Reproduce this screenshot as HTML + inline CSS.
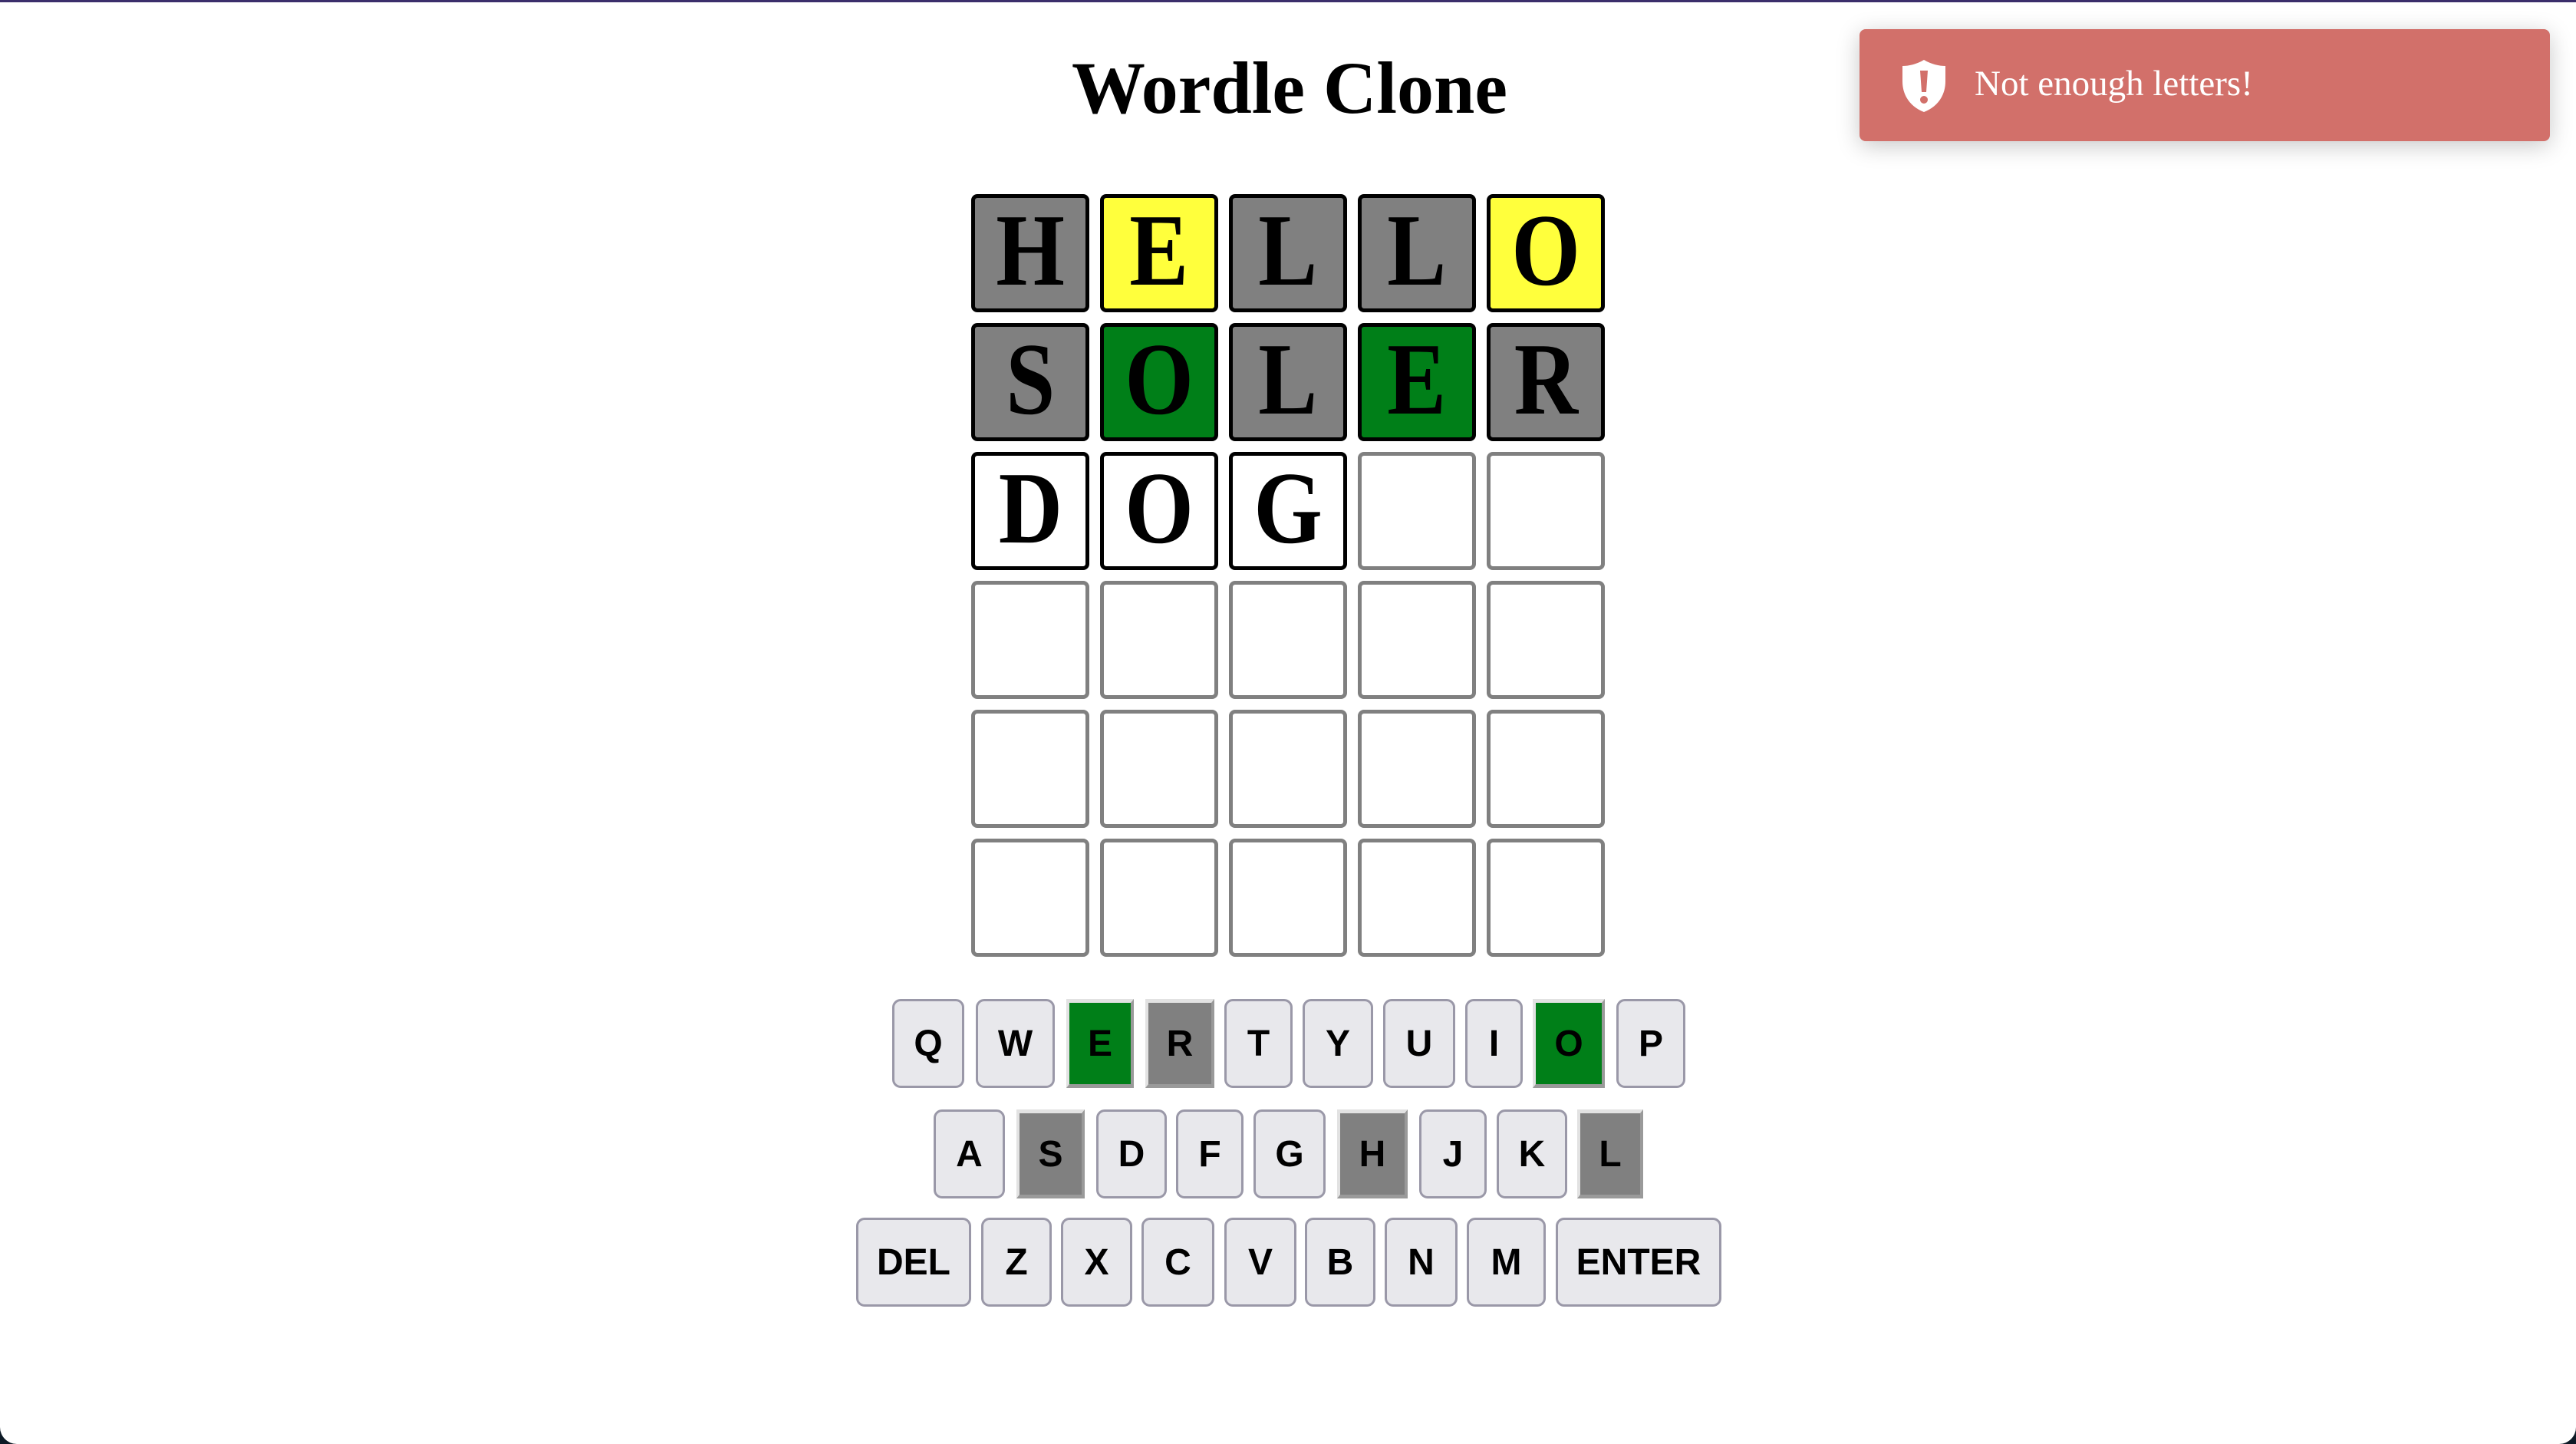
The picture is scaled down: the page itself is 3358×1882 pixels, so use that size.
<!DOCTYPE html>
<html><head><meta charset="utf-8"><style>
html,body{margin:0;padding:0;width:3358px;height:1882px;overflow:hidden;background:#0d1a26;}
#pg{position:absolute;left:0;top:0;width:3358px;height:1882px;background:#fff;border-radius:0 0 22px 22px;overflow:hidden;}
#bar{position:absolute;left:0;top:0;width:3358px;height:3px;background:#3b2e6b;}
h1{position:absolute;left:0;width:3358px;top:50px;margin:0;text-align:center;font:bold 96px "Liberation Serif",serif;line-height:130px;color:#000;padding-left:4px;box-sizing:border-box;}
.t{position:absolute;width:154px;height:154px;box-sizing:border-box;border:5px solid #000;border-radius:8px;font:bold 134px "Liberation Serif",serif;line-height:136px;color:#000;text-align:center;}
.t span{display:inline-block;transform:scaleX(0.86);}
.e{border-color:#808080;background:#fff;}
.g{background:#808080}.y{background:#ffff3c}.gr{background:#007f18}.w{background:#fff}
.k{position:absolute;box-sizing:border-box;background:#e8e8ec;border:3px solid #9a98a8;border-radius:11px;font:bold 48px "Liberation Sans",sans-serif;color:#000;text-align:center;}
.kg,.kx{border-radius:0;border-width:5px 4px;border-style:solid;border-color:#e2e2e2 #9a9a9a #9a9a9a #e2e2e2;}
.kg{background:#007f18}.kx{background:#808080}
#toast{position:absolute;left:2424px;top:38px;width:900px;height:146px;background:#d2706a;border-radius:8px;box-shadow:0 6px 30px rgba(0,0,0,0.22);}
#toast .tx{position:absolute;left:150px;top:0;font:47px "Liberation Serif",serif;line-height:142px;color:#fff;}
</style></head><body><div id="pg">
<div id="bar"></div>
<h1>Wordle Clone</h1>

<div class="t g" style="left:1266px;top:253px"><span>H</span></div>
<div class="t y" style="left:1434px;top:253px"><span>E</span></div>
<div class="t g" style="left:1602px;top:253px"><span>L</span></div>
<div class="t g" style="left:1770px;top:253px"><span>L</span></div>
<div class="t y" style="left:1938px;top:253px"><span>O</span></div>

<div class="t g" style="left:1266px;top:421px"><span>S</span></div>
<div class="t gr" style="left:1434px;top:421px"><span>O</span></div>
<div class="t g" style="left:1602px;top:421px"><span>L</span></div>
<div class="t gr" style="left:1770px;top:421px"><span>E</span></div>
<div class="t g" style="left:1938px;top:421px"><span>R</span></div>

<div class="t w" style="left:1266px;top:589px"><span>D</span></div>
<div class="t w" style="left:1434px;top:589px"><span>O</span></div>
<div class="t w" style="left:1602px;top:589px"><span>G</span></div>
<div class="t e" style="left:1770px;top:589px"></div>
<div class="t e" style="left:1938px;top:589px"></div>

<div class="t e" style="left:1266px;top:757px"></div><div class="t e" style="left:1434px;top:757px"></div><div class="t e" style="left:1602px;top:757px"></div><div class="t e" style="left:1770px;top:757px"></div><div class="t e" style="left:1938px;top:757px"></div>
<div class="t e" style="left:1266px;top:925px"></div><div class="t e" style="left:1434px;top:925px"></div><div class="t e" style="left:1602px;top:925px"></div><div class="t e" style="left:1770px;top:925px"></div><div class="t e" style="left:1938px;top:925px"></div>
<div class="t e" style="left:1266px;top:1093px"></div><div class="t e" style="left:1434px;top:1093px"></div><div class="t e" style="left:1602px;top:1093px"></div><div class="t e" style="left:1770px;top:1093px"></div><div class="t e" style="left:1938px;top:1093px"></div>

<div class="k" style="left:1163px;top:1302px;width:94px;height:116px;line-height:112px">Q</div>
<div class="k" style="left:1272px;top:1302px;width:103px;height:116px;line-height:112px">W</div>
<div class="k kg" style="left:1390px;top:1302px;width:88px;height:116px;line-height:108px">E</div>
<div class="k kx" style="left:1493px;top:1302px;width:90px;height:116px;line-height:108px">R</div>
<div class="k" style="left:1596px;top:1302px;width:89px;height:116px;line-height:112px">T</div>
<div class="k" style="left:1698px;top:1302px;width:92px;height:116px;line-height:112px">Y</div>
<div class="k" style="left:1803px;top:1302px;width:94px;height:116px;line-height:112px">U</div>
<div class="k" style="left:1910px;top:1302px;width:75px;height:116px;line-height:112px">I</div>
<div class="k kg" style="left:1998px;top:1302px;width:94px;height:116px;line-height:108px">O</div>
<div class="k" style="left:2107px;top:1302px;width:90px;height:116px;line-height:112px">P</div>

<div class="k" style="left:1217px;top:1446px;width:93px;height:116px;line-height:112px">A</div>
<div class="k kx" style="left:1325px;top:1446px;width:89px;height:116px;line-height:108px">S</div>
<div class="k" style="left:1429px;top:1446px;width:92px;height:116px;line-height:112px">D</div>
<div class="k" style="left:1533px;top:1446px;width:88px;height:116px;line-height:112px">F</div>
<div class="k" style="left:1634px;top:1446px;width:94px;height:116px;line-height:112px">G</div>
<div class="k kx" style="left:1743px;top:1446px;width:92px;height:116px;line-height:108px">H</div>
<div class="k" style="left:1850px;top:1446px;width:88px;height:116px;line-height:112px">J</div>
<div class="k" style="left:1951px;top:1446px;width:92px;height:116px;line-height:112px">K</div>
<div class="k kx" style="left:2056px;top:1446px;width:86px;height:116px;line-height:108px">L</div>

<div class="k" style="left:1116px;top:1587px;width:150px;height:116px;line-height:112px">DEL</div>
<div class="k" style="left:1279px;top:1587px;width:92px;height:116px;line-height:112px">Z</div>
<div class="k" style="left:1383px;top:1587px;width:93px;height:116px;line-height:112px">X</div>
<div class="k" style="left:1488px;top:1587px;width:95px;height:116px;line-height:112px">C</div>
<div class="k" style="left:1596px;top:1587px;width:94px;height:116px;line-height:112px">V</div>
<div class="k" style="left:1701px;top:1587px;width:92px;height:116px;line-height:112px">B</div>
<div class="k" style="left:1805px;top:1587px;width:95px;height:116px;line-height:112px">N</div>
<div class="k" style="left:1912px;top:1587px;width:103px;height:116px;line-height:112px">M</div>
<div class="k" style="left:2028px;top:1587px;width:216px;height:116px;line-height:112px">ENTER</div>

<div id="toast">
<svg style="position:absolute;left:50px;top:38px" width="68" height="72" viewBox="0 0 64 72">
<path d="M32 2 C22 8 12 10 4 10 L4 30 C4 50 16 64 32 70 C48 64 60 50 60 30 L60 10 C52 10 42 8 32 2 Z" fill="#fff"/>
<path d="M27 16 L37 16 L35 44 L29 44 Z" fill="#d2706a"/>
<circle cx="32" cy="54" r="5" fill="#d2706a"/>
</svg>
<div class="tx">Not enough letters!</div>
</div>
</div></body></html>
